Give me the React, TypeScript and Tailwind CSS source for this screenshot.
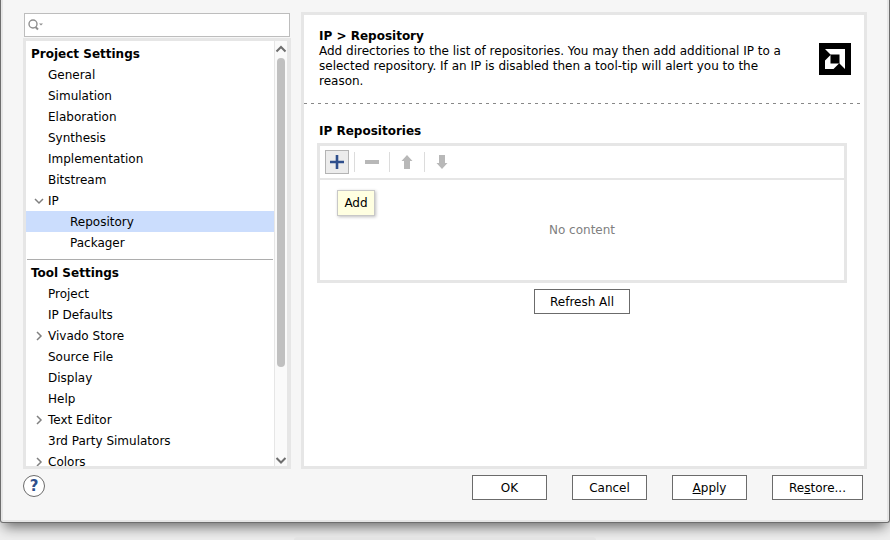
import type { ReactNode } from "react";

type Item = { label: string; level?: number; open?: boolean; expandable?: boolean; selected?: boolean };

const projectItems: Item[] = [
  { label: "General" },
  { label: "Simulation" },
  { label: "Elaboration" },
  { label: "Synthesis" },
  { label: "Implementation" },
  { label: "Bitstream" },
  { label: "IP", expandable: true, open: true },
  { label: "Repository", level: 2, selected: true },
  { label: "Packager", level: 2 },
];

const toolItems: Item[] = [
  { label: "Project" },
  { label: "IP Defaults" },
  { label: "Vivado Store", expandable: true },
  { label: "Source File" },
  { label: "Display" },
  { label: "Help" },
  { label: "Text Editor", expandable: true },
  { label: "3rd Party Simulators" },
  { label: "Colors", expandable: true },
];

function Chevron({ open }: { open?: boolean }) {
  return (
    <svg width="10" height="10" viewBox="0 0 10 10" fill="none" stroke="#808080" strokeWidth="1.5" aria-hidden="true">
      <path d={open ? "M1 3l4 4 4-4" : "M3 1l4 4-4 4"} />
    </svg>
  );
}

function Tree({ title, items }: { title: string; items: Item[] }) {
  return (
    <section>
      <h2 className="h-[21px] pl-[5px] pt-px font-bold leading-[21px]">{title}</h2>
      <ul>
        {items.map((item) => (
          <li key={item.label}>
            <button
              type="button"
              className={`flex h-[21px] w-full items-center text-left ${item.selected ? "bg-[#cbddfd]" : ""} ${item.level === 2 ? "pl-11" : "pl-2"}`}
            >
              {item.level !== 2 && (
                <span className="w-[14px] shrink-0">{item.expandable && <Chevron open={item.open} />}</span>
              )}
              {item.label}
            </button>
          </li>
        ))}
      </ul>
    </section>
  );
}

function PushButton({ children, className = "w-[75px]" }: { children: ReactNode; className?: string }) {
  return (
    <button type="button" className={`h-[25px] border border-[#6b6b6b] bg-white text-center ${className}`}>
      {children}
    </button>
  );
}

function Separator() {
  return <span className="mx-[5px] h-5 w-px bg-[#dcdcdc]" />;
}

function ToolButton({ label, active, children }: { label: string; active?: boolean; children: ReactNode }) {
  return (
    <button
      type="button"
      aria-label={label}
      className={`flex size-6 items-center justify-center border ${active ? "border-[#b4b4b4] bg-[#ececec]" : "border-transparent"}`}
    >
      <svg width="14" height="14" viewBox="0 0 14 14" fill={active ? "#2f4f8c" : "#b8b8b8"} aria-hidden="true">
        {children}
      </svg>
    </button>
  );
}

export default function App() {
  return (
    <div className="flex h-screen flex-col overflow-hidden bg-[#eeeeee] font-['DejaVu_Sans',sans-serif] text-[12px] text-black">
      <div className="mb-[14px] flex min-h-0 flex-1 flex-col rounded-b-[3px] border border-t-0 border-[#6e6e6e] bg-[#e6e6e6] px-[2px] pb-[2px] shadow-[0_8px_12px_-4px_rgba(0,0,0,0.55)]">
        <div className="flex min-h-0 flex-1 flex-col bg-[#f6f6f6] px-5 pb-5 pt-3">
          <div className="flex min-h-0 flex-1 gap-[10px]">
            <aside className="flex w-[268px] shrink-0 flex-col">
              <label className="mx-px mb-px mt-px flex h-6 items-center border border-[#bdbdbd] bg-white pl-[3px]">
                <svg width="15" height="12" viewBox="0 0 15 12" fill="none" stroke="#8f8f8f" aria-hidden="true">
                  <circle cx="5" cy="5" r="4" strokeWidth="1.4" />
                  <path d="M7.500 8l2.500 2.500" strokeWidth="2" />
                  <path d="M11 4.500h4l-2 2z" fill="#8f8f8f" stroke="none" />
                </svg>
                <input type="text" aria-label="Search settings" className="min-w-0 flex-1 outline-none" />
              </label>
              <div className="flex min-h-0 flex-1 border-[3px] border-r-4 border-[#e6e6e6] bg-white">
                <nav className="min-w-0 flex-1 overflow-hidden pt-[2px]">
                  <Tree title="Project Settings" items={projectItems} />
                  <hr className="mx-px mb-[2px] mt-[6px] border-[#adadad]" />
                  <Tree title="Tool Settings" items={toolItems} />
                </nav>
                <div className="flex w-[13px] shrink-0 flex-col items-center border-l border-[#e6e6e6] bg-[#fafafa]">
                  <svg className="my-[3px] shrink-0" width="12" height="11" viewBox="0 0 12 11" fill="none" stroke="#6e6e6e" strokeWidth="2" aria-hidden="true">
                    <path d="M1.500 7.500L6 3l4.500 4.500" />
                  </svg>
                  <div className="min-h-0 w-full flex-1 px-[2px]">
                    <div className="h-[78%] rounded-full bg-[#c0c0c0]" />
                  </div>
                  <svg className="shrink-0" width="12" height="12" viewBox="0 0 12 12" fill="none" stroke="#6e6e6e" strokeWidth="2" aria-hidden="true">
                    <path d="M1.500 4L6 8.500 10.500 4" />
                  </svg>
                </div>
              </div>
            </aside>

            <main className="min-w-0 flex-1 border-[3px] border-[#e6e6e6] bg-white">
              <header className="flex items-center gap-5 pb-[14px] pl-[15px] pr-[13px] pt-[14px]">
                <div className="min-w-0 flex-1 leading-[15px]">
                  <h1 className="font-bold">IP &gt; Repository</h1>
                  <p>
                    Add directories to the list of repositories. You may then add additional IP to a selected
                    repository. If an IP is disabled then a tool-tip will alert you to the reason.
                  </p>
                </div>
                <svg className="shrink-0" width="32" height="32" viewBox="0 0 32 32" aria-label="AMD">
                  <rect width="32" height="32" fill="#000" />
                  <path d="M6 6h20v20l-5.500-5.500v-9h-9z" fill="#fff" />
                  <path d="M11.500 12v8.500H20L14.500 26H6v-8.500z" fill="#fff" />
                </svg>
              </header>
              <div className="mr-1 h-px bg-[repeating-linear-gradient(90deg,#888_0_3px,transparent_3px_7px)]" />
              <section className="pl-[13px] pr-[17px] pt-5">
                <h2 className="mb-1 pl-[2px] font-bold leading-[15px]">IP Repositories</h2>
                <div className="border-[3px] border-[#e6e6e6]">
                  <div className="relative flex h-[34px] items-center border-b-2 border-[#e6e6e6] pl-[5px]">
                    <ToolButton label="Add" active>
                      <path d="M5.700 0h2.600v5.700H14v2.600H8.300V14H5.700V8.300H0V5.700h5.700z" />
                    </ToolButton>
                    <Separator />
                    <ToolButton label="Remove">
                      <path d="M0 5h14v4H0z" />
                    </ToolButton>
                    <Separator />
                    <ToolButton label="Move up">
                      <path d="M7 0l5.500 6H10v8H4V6H1.500z" />
                    </ToolButton>
                    <Separator />
                    <ToolButton label="Move down">
                      <path d="M7 14l5.500-6H10V0H4v8H1.500z" />
                    </ToolButton>
                    <div
                      role="tooltip"
                      className="absolute left-[17px] top-11 h-[26px] w-[38px] border border-[#c8c8c8] bg-[#ffffe1] text-center leading-6 shadow-[1px_1px_3px_rgba(0,0,0,0.25)]"
                    >
                      Add
                    </div>
                  </div>
                  <p className="flex h-[100px] items-center justify-center text-[#808080]">No content</p>
                </div>
                <div className="mt-[6px] flex justify-center">
                  <PushButton className="w-24">Refresh All</PushButton>
                </div>
              </section>
            </main>
          </div>
          <footer className="flex justify-between pr-1 pt-[6px]">
            <button
              type="button"
              aria-label="Help"
              className="size-[22px] rounded-full border border-[#6b6b6b] bg-white text-center text-[15px] font-bold leading-5 text-[#2f4f8c]"
            >
              ?
            </button>
            <div className="flex gap-[25px]">
              <PushButton>OK</PushButton>
              <PushButton>Cancel</PushButton>
              <PushButton>
                <u>A</u>pply
              </PushButton>
              <PushButton className="w-[91px]">
                Re<u>s</u>tore...
              </PushButton>
            </div>
          </footer>
        </div>
      </div>
      <div className="mx-auto h-[3px] w-[34%] rounded-t-full bg-[#e4e4e4]" />
    </div>
  );
}
